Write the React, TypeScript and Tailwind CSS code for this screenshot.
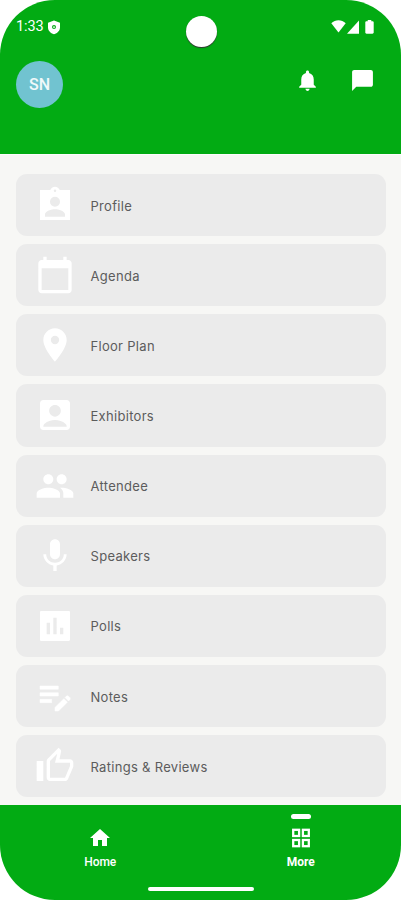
import {
  MdAccountBox,
  MdCalendarToday,
  MdChatBubble,
  MdHome,
  MdLocationOn,
  MdMic,
  MdNotifications,
  MdOutlineThumbUp,
  MdPeople,
} from "react-icons/md";
import type { ComponentType } from "react";

type IconProps = { size?: number; className?: string };

function ProfileIcon({ size = 24, className }: IconProps) {
  return (
    <svg width={size} height={size} className={className} viewBox="0 0 24 24" fill="currentColor">
      <path
        fillRule="evenodd"
        d="M21 3h-6.180C14.400 1.840 13.300 1 12 1s-2.400.840-2.820 2H3v18h18V3Zm-9-.25a.75.75 0 1 1 0 1.500.75.75 0 0 1 0-1.500ZM12 7a3 3 0 1 1 0 6 3 3 0 0 1 0-6Zm6 12H6v-1.400c0-2 4-3.100 6-3.100s6 1.100 6 3.100V19Z"
      />
    </svg>
  );
}

function PollIcon({ size = 24, className }: IconProps) {
  return (
    <svg width={size} height={size} className={className} viewBox="0 0 24 24" fill="currentColor">
      <path
        fillRule="evenodd"
        d="M3.700 3h16.600c.4 0 .7.3.7.7v16.600c0 .4-.3.7-.7.700H3.700a.7.700 0 0 1-.7-.7V3.700c0-.4.3-.7.7-.7ZM7 10v7h2v-7H7Zm4-3v10h2V7h-2Zm4 6v4h2v-4h-2Z"
      />
    </svg>
  );
}

function NotesIcon({ size = 24, className }: IconProps) {
  return (
    <svg
      width={size}
      height={size}
      className={className}
      viewBox="0 0 24 24"
      fill="currentColor"
      stroke="currentColor"
      strokeWidth=".3"
    >
      <path d="M3 10h11v2H3v-2Zm0-2h11V6H3v2Zm0 8h7v-2H3v2Z" />
      <path d="m18.010 12.870.710-.710a1 1 0 0 1 1.410 0l.710.710c.390.390.390 1.020 0 1.410l-.710.710-2.120-2.120Zm-.710.710-5.300 5.300V21h2.120l5.300-5.300-2.120-2.120Z" />
    </svg>
  );
}

function GridIcon({ size = 24, className }: IconProps) {
  return (
    <svg
      width={size}
      height={size}
      className={className}
      viewBox="0 0 24 24"
      fill="none"
      stroke="currentColor"
      strokeWidth="2.300"
    >
      <rect x="4.200" y="3.800" width="5.900" height="6.200" />
      <rect x="13.900" y="3.800" width="5.900" height="6.200" />
      <rect x="4.200" y="14" width="5.900" height="6.200" />
      <rect x="13.900" y="14" width="5.900" height="6.200" />
    </svg>
  );
}

const items: { label: string; Icon: ComponentType<IconProps> }[] = [
  { label: "Profile", Icon: ProfileIcon },
  { label: "Agenda", Icon: MdCalendarToday },
  { label: "Floor Plan", Icon: MdLocationOn },
  { label: "Exhibitors", Icon: MdAccountBox },
  { label: "Attendee", Icon: MdPeople },
  { label: "Speakers", Icon: MdMic },
  { label: "Polls", Icon: PollIcon },
  { label: "Notes", Icon: NotesIcon },
  { label: "Ratings & Reviews", Icon: MdOutlineThumbUp },
];

function StatusBar() {
  return (
    <div className="flex h-[54px] items-start justify-between pl-[16px] pr-[27px] pt-[19px]">
      <div className="flex items-center gap-[5px]">
        <span className="w-[27px] whitespace-nowrap font-[Roboto] text-[14.5px] leading-[16px] tracking-[-0.1px]">
          1:33
        </span>
        <svg className="h-[15px] w-[12px]" viewBox="0 0 12 15" fill="currentColor">
          <path
            fillRule="evenodd"
            d="M6 .5 12 2.800v4.700c0 3-2.400 5.700-6 6.700C2.400 13.200 0 10.500 0 7.500V2.800L6 .5Zm0 4.600a2 2 0 1 0 0 4 2 2 0 0 0 0-4Z"
          />
          <circle cx="6" cy="7.100" r=".9" />
        </svg>
      </div>
      <div className="flex items-start pt-[1px]">
        <svg className="h-[13px] w-[15px]" viewBox="0 0 15 13" fill="currentColor">
          <path d="M.3 3.200C4.300-.9 10.700-.9 14.700 3.200L7.500 12.500.3 3.200Z" />
        </svg>
        <svg className="ml-[1px] h-[14px] w-[12px]" viewBox="0 0 12 14" fill="currentColor">
          <path d="M12 .5v13.300H0L12 .5Z" />
        </svg>
        <svg className="ml-[6px] h-[14px] w-[9px]" viewBox="0 0 9 14" fill="currentColor">
          <path d="M2.700 0h3.600v1.200h1.200c.6 0 1.200.5 1.200 1.100v10.300c0 .6-.6 1.200-1.200 1.200h-6c-.6 0-1.200-.6-1.200-1.200V2.300c0-.6.6-1.100 1.200-1.100h1.200V0Z" />
        </svg>
      </div>
    </div>
  );
}

export default function App() {
  return (
    <div className="h-[900px] w-[401px] overflow-hidden bg-white">
      <div className="relative flex h-full flex-col overflow-hidden rounded-[55px] bg-[#f7f7f5] font-[Inter,sans-serif]">
        <header className="h-[154px] shrink-0 bg-[#02ab13] text-white">
          <StatusBar />
          <div className="flex items-start justify-between pl-[16px] pr-[26px] pt-[7px]">
            <div className="flex size-[47px] items-center justify-center rounded-full bg-[#71c3d0] pt-px font-[Roboto] text-[16px] font-medium text-white/90">
              SN
            </div>
            <div className="flex gap-[30px] pt-[7px]">
              <MdNotifications size={25} />
              <MdChatBubble size={25} />
            </div>
          </div>
        </header>
        <div className="absolute left-[186px] top-[16px] size-[31px] rounded-full bg-white shadow-[0_1px_1px_#333]" />

        <main className="flex min-h-0 flex-1 flex-col gap-[8px] border-t border-[#fdfdfc] pl-[16px] pr-[15.5px] pt-[19px]">
          {items.map(({ label, Icon }) => (
            <div
              key={label}
              className="flex h-[62.15px] shrink-0 items-center rounded-[11px] bg-[#ebebeb] pl-[19px]"
            >
              <Icon size={40} className="shrink-0 text-white" />
              <span className="ml-[15.5px] pt-[1px] text-[13px] leading-[16px] tracking-[0.3px] text-[#5c5c5c]">
                {label}
              </span>
            </div>
          ))}
        </main>

        <nav className="flex h-[95px] shrink-0 flex-col bg-[#02ab13] text-white">
          <div className="grid flex-1 grid-cols-2 font-[Roboto] text-[12px] leading-[14px]">
            <div className="flex flex-col items-center pt-[21px]">
              <MdHome size={24} />
              <span className="mt-[5px] font-medium tracking-[-0.1px]">Home</span>
            </div>
            <div className="flex flex-col items-center pt-[9px]">
              <span className="h-[5px] w-[20px] rounded-full bg-white" />
              <GridIcon size={24} className="mt-[7px]" />
              <span className="mt-[5px] font-bold">More</span>
            </div>
          </div>
          <div className="mx-auto mb-[9px] h-[4px] w-[106px] rounded-full bg-white" />
        </nav>
      </div>
    </div>
  );
}
